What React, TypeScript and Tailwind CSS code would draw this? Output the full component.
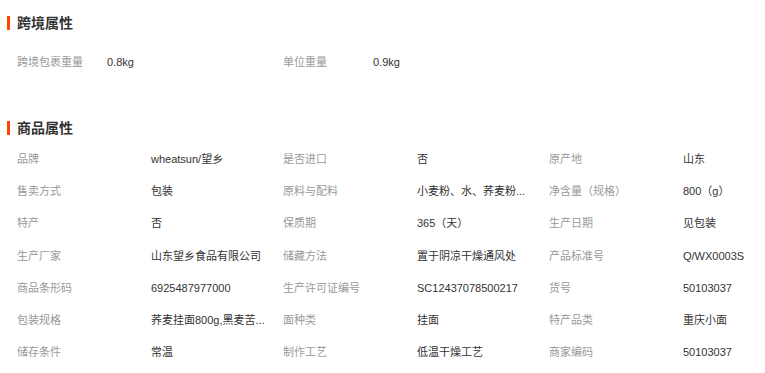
const crossBorder = [
  ['跨境包裹重量', '0.8kg'],
  ['单位重量', '0.9kg'],
]

const goods = [
  ['品牌', 'wheatsun/望乡'],
  ['是否进口', '否'],
  ['原产地', '山东'],
  ['售卖方式', '包装'],
  ['原料与配料', '小麦粉、水、荞麦粉...'],
  ['净含量（规格）', '800（g）'],
  ['特产', '否'],
  ['保质期', '365（天）'],
  ['生产日期', '见包装'],
  ['生产厂家', '山东望乡食品有限公司'],
  ['储藏方法', '置于阴凉干燥通风处'],
  ['产品标准号', 'Q/WX0003S'],
  ['商品条形码', '6925487977000'],
  ['生产许可证编号', 'SC12437078500217'],
  ['货号', '50103037'],
  ['包装规格', '荞麦挂面800g,黑麦苦...'],
  ['面种类', '挂面'],
  ['特产品类', '重庆小面'],
  ['储存条件', '常温'],
  ['制作工艺', '低温干燥工艺'],
  ['商家编码', '50103037'],
]

function Heading({ title }: { title: string }) {
  return (
    <div className="flex items-center h-[14px] pl-[7px]">
      <span className="w-[3px] h-[14px] bg-[#ff4400]" />
      <h2 className="ml-[7px] text-[14px] leading-[14px] font-bold text-[#333]">{title}</h2>
    </div>
  )
}

export default function App() {
  return (
    <div
      className="w-[765px] min-h-[373px] bg-white pt-[16px] text-[11px] overflow-hidden"
      style={{ fontFamily: '"Liberation Sans", "Noto Sans CJK SC", sans-serif' }}
    >
      <Heading title="跨境属性" />
      <div className="mt-[16px] pl-[17px] grid grid-cols-[90px_176px_90px_176px]">
        {crossBorder.map(([label, value]) => (
          <div key={label} className="contents">
            <div className="h-[32px] flex items-center text-[#999]">{label}</div>
            <div className="h-[32px] flex items-center text-[#333]">{value}</div>
          </div>
        ))}
      </div>

      <div className="mt-[43px]">
        <Heading title="商品属性" />
      </div>
      <div className="mt-[8px] pl-[17px] grid grid-cols-[134px_132px_134px_132px_134px_minmax(0,1fr)]">
        {goods.map(([label, value]) => (
          <div key={label} className="contents">
            <div className="h-[32.25px] flex items-center text-[#999] whitespace-nowrap">{label}</div>
            <div className="h-[32.25px] flex items-center text-[#333] whitespace-nowrap">{value}</div>
          </div>
        ))}
      </div>
    </div>
  )
}
